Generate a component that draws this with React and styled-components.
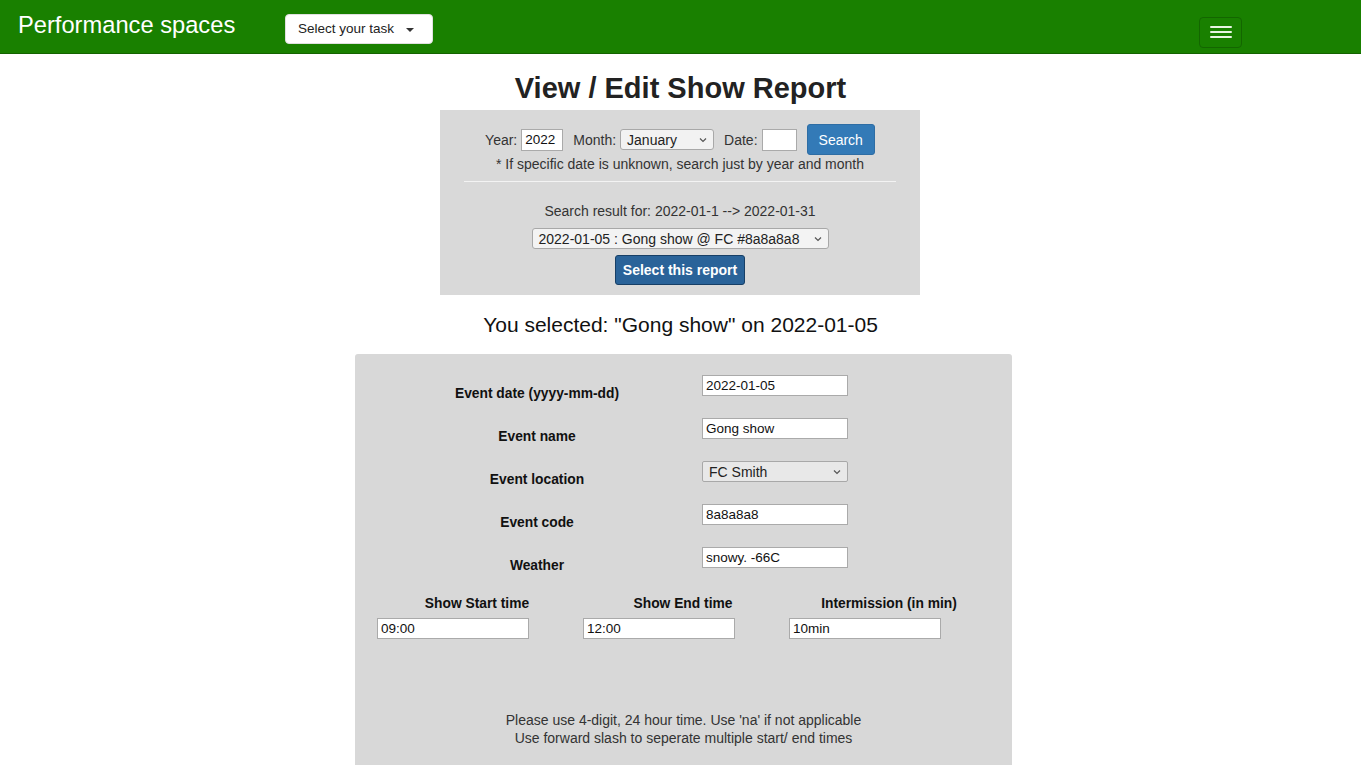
import React from "react";
import styled, { createGlobalStyle } from "styled-components";

const GlobalStyle = createGlobalStyle`
  body {
    margin: 0;
    font-family: "Liberation Sans", Arial, sans-serif;
    background: #ffffff;
    color: #222;
  }
  * { box-sizing: border-box; }
`;

// NAVBAR //

const Nav = styled.div`
  height: 54px;
  background-color: #198000;
  border-bottom: 1px solid #136300;
  display: flex;
  align-items: center;
  padding-left: 18px;
`;

const Brand = styled.div`
  color: #ffffff;
  font-size: 23.7px;
  width: 267px;
  margin-top: -3px;
`;

const TaskButton = styled.button`
  height: 30px;
  width: 148px;
  margin-top: 4px;
  background: #ffffff;
  border: 1px solid #e0e0e0;
  border-radius: 4px;
  font-family: "Liberation Sans", Arial, sans-serif;
  font-size: 13.5px;
  color: #222;
  display: flex;
  align-items: center;
  padding-left: 12px;
  gap: 12px;
`;

const Caret = styled.span`
  width: 0;
  height: 0;
  border-left: 4px solid transparent;
  border-right: 4px solid transparent;
  border-top: 4px solid #333;
  margin-top: 2px;
`;

const Spacer = styled.div`
  flex: 1;
`;

const Burger = styled.div`
  width: 43px;
  height: 31px;
  margin-right: 119px;
  margin-top: 11px;
  border: 1px solid #136600;
  border-radius: 4px;
  display: flex;
  flex-direction: column;
  justify-content: center;
  align-items: center;
  gap: 3px;
`;

const BurgerLine = styled.span`
  width: 22px;
  height: 2px;
  background: #e8f5e3;
  border-radius: 1px;
`;

// SEARCH SECTION //

const Main = styled.div`
  display: flex;
  flex-direction: column;
  align-items: center;
`;

const Title = styled.h1`
  margin: 18px 0 6px;
  font-size: 29px;
  font-weight: bold;
  color: #222;
  line-height: 32px;
`;

const SearchPanel = styled.div`
  width: 480px;
  margin-left: -1px;
  background: #d9d9d9;
  padding: 14px 24px 10px;
  display: flex;
  flex-direction: column;
  align-items: center;
  font-size: 14px;
  color: #333;
`;

const SearchRow = styled.div`
  display: flex;
  align-items: center;
  gap: 4px;
`;

const RowLabel = styled.span`
  font-size: 14px;
  margin-left: ${(p) => p.gap || 0}px;
`;

const BoxInput = styled.input`
  width: ${(p) => p.w}px;
  height: ${(p) => p.h || 22}px;
  border: 1px solid #aaa;
  background: #fff;
  font-family: "Liberation Sans", Arial, sans-serif;
  font-size: 13.5px;
  padding: 0 3px;
  color: #111;
  outline: none;
`;

const FakeSelect = styled.div`
  width: ${(p) => p.w}px;
  height: ${(p) => p.h || 21}px;
  border: 1px solid #a8a8a8;
  border-radius: 3px;
  background: ${(p) => p.bg || "#f2f2f2"};
  font-size: 14px;
  color: #222;
  display: flex;
  align-items: center;
  justify-content: space-between;
  padding: 0 6px;
`;

const Chevron = () => (
  <svg width="8" height="6" viewBox="0 0 8 6">
    <path d="M1 1.5 L4 4.5 L7 1.5" fill="none" stroke="#555" strokeWidth="1.2" />
  </svg>
);

const BlueButton = styled.button`
  height: ${(p) => p.h}px;
  padding: 0 ${(p) => p.px}px;
  background: ${(p) => p.bg};
  border: 1px solid ${(p) => p.border};
  border-radius: 3px;
  color: #ffffff;
  font-family: "Liberation Sans", Arial, sans-serif;
  font-size: 14px;
  font-weight: ${(p) => (p.bold ? "bold" : "normal")};
  margin-left: ${(p) => p.ml || 0}px;
  margin-top: ${(p) => p.mt || 0}px;
`;

const Note = styled.div`
  margin-top: 1px;
  font-size: 14px;
`;

const Divider = styled.div`
  width: 100%;
  height: 1px;
  background: #f3f3f3;
  margin: 9px 0 21px;
`;

const ResultText = styled.div`
  font-size: 14px;
  margin-bottom: 9px;
`;

const Selected = styled.div`
  font-size: 21px;
  color: #111;
  margin: 18px 0 17px;
`;

// REPORT FORM //

const FormPanel = styled.div`
  width: 657px;
  margin-left: 6px;
  background: #d8d8d8;
  border-radius: 3px 3px 0 0;
  padding: 21px 0 20px 22px;
`;

const FieldRow = styled.div`
  display: grid;
  grid-template-columns: 320px 146px;
  column-gap: 5px;
  margin-bottom: 16px;
`;

const FieldLabel = styled.div`
  text-align: center;
  font-weight: bold;
  font-size: 13.8px;
  line-height: 16px;
  color: #111;
  padding-top: 11px;
`;

const TimesGrid = styled.div`
  display: grid;
  grid-template-columns: repeat(3, 200px);
  column-gap: 6px;
  margin-top: 22px;
`;

const TimeCol = styled.div`
  display: flex;
  flex-direction: column;
`;

const TimeLabel = styled.div`
  text-align: center;
  font-weight: bold;
  font-size: 13.8px;
  line-height: 16px;
  color: #111;
  margin-bottom: 6px;
`;

const Hints = styled.div`
  margin-top: 72px;
  padding-right: 22px;
  text-align: center;
  font-size: 14px;
  line-height: 18px;
  color: #333;
`;

const fields = [
  { label: "Event date (yyyy-mm-dd)", value: "2022-01-05" },
  { label: "Event name", value: "Gong show" },
  { label: "Event location", value: "FC Smith", select: true },
  { label: "Event code", value: "8a8a8a8" },
  { label: "Weather", value: "snowy. -66C" },
];

const times = [
  { label: "Show Start time", value: "09:00" },
  { label: "Show End time", value: "12:00" },
  { label: "Intermission (in min)", value: "10min" },
];

const App = () => {
  return (
    <>
      <GlobalStyle />
      <Nav>
        <Brand>Performance spaces</Brand>
        <TaskButton>
          Select your task <Caret />
        </TaskButton>
        <Spacer />
        <Burger>
          <BurgerLine />
          <BurgerLine />
          <BurgerLine />
        </Burger>
      </Nav>
      <Main>
        <Title>View / Edit Show Report</Title>
        <SearchPanel>
          <SearchRow>
            <RowLabel>Year:</RowLabel>
            <BoxInput w={42} defaultValue="2022" />
            <RowLabel gap={6}>Month:</RowLabel>
            <FakeSelect w={94}>
              January <Chevron />
            </FakeSelect>
            <RowLabel gap={6}>Date:</RowLabel>
            <BoxInput w={35} defaultValue="" />
            <BlueButton h={31} px={11} bg="#337ab7" border="#2e6da4" ml={6}>
              Search
            </BlueButton>
          </SearchRow>
          <Note>* If specific date is unknown, search just by year and month</Note>
          <Divider />
          <ResultText>Search result for: 2022-01-1 --&gt; 2022-01-31</ResultText>
          <FakeSelect w={297} bg="#f3f3f3">
            2022-01-05 : Gong show @ FC #8a8a8a8 <Chevron />
          </FakeSelect>
          <BlueButton h={30} px={7} bg="#2a6399" border="#173f66" bold mt={6}>
            Select this report
          </BlueButton>
        </SearchPanel>
        <Selected>You selected: "Gong show" on 2022-01-05</Selected>
        <FormPanel>
          {fields.map((f) => (
            <FieldRow key={f.label}>
              <FieldLabel>{f.label}</FieldLabel>
              {f.select ? (
                <FakeSelect w={146} bg="#e8e8e8" style={{ borderRadius: 2 }}>
                  {f.value} <Chevron />
                </FakeSelect>
              ) : (
                <BoxInput w={146} h={21} defaultValue={f.value} />
              )}
            </FieldRow>
          ))}
          <TimesGrid>
            {times.map((t) => (
              <TimeCol key={t.label}>
                <TimeLabel>{t.label}</TimeLabel>
                <BoxInput w={152} h={21} defaultValue={t.value} />
              </TimeCol>
            ))}
          </TimesGrid>
          <Hints>
            Please use 4-digit, 24 hour time. Use 'na' if not applicable
            <br />
            Use forward slash to seperate multiple start/ end times
          </Hints>
        </FormPanel>
      </Main>
    </>
  );
};

export default App;
